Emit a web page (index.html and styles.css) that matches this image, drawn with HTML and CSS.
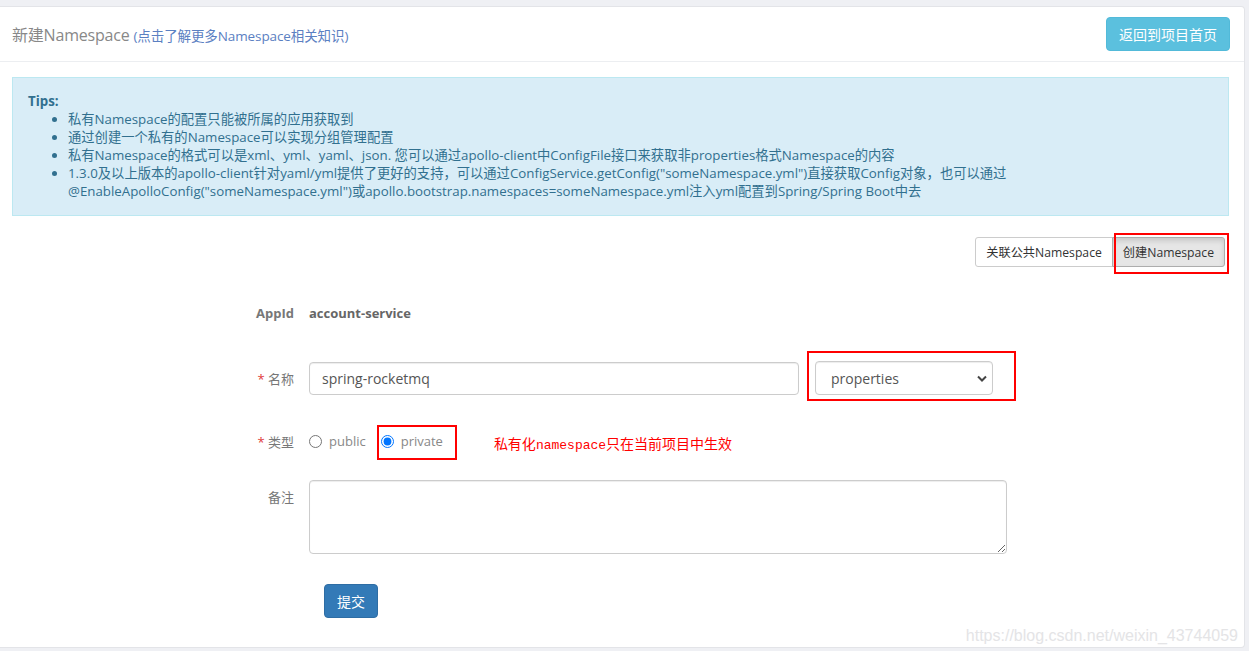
FILE: index.html
```html
<!DOCTYPE html>
<html lang="zh-CN">
<head>
<meta charset="utf-8">
<title>新建Namespace</title>
<link rel="stylesheet" href="styles.css">
</head>
<body>
<div class="panel">
  <div class="panel-header">
    <div class="title">新建Namespace <a class="title-link" href="#">(点击了解更多Namespace相关知识)</a></div>
    <button class="btn btn-info">返回到项目首页</button>
  </div>
  <div class="panel-body">
    <div class="alert">
      <div class="tips-title">Tips:</div>
      <ul class="tips-list">
        <li>私有Namespace的配置只能被所属的应用获取到</li>
        <li>通过创建一个私有的Namespace可以实现分组管理配置</li>
        <li>私有Namespace的格式可以是xml、yml、yaml、json. 您可以通过apollo-client中ConfigFile接口来获取非properties格式Namespace的内容</li>
        <li>1.3.0及以上版本的apollo-client针对yaml/yml提供了更好的支持，可以通过ConfigService.getConfig("someNamespace.yml")直接获取Config对象，也可以通过@EnableApolloConfig("someNamespace.yml")或apollo.bootstrap.namespaces=someNamespace.yml注入yml配置到Spring/Spring Boot中去</li>
      </ul>
    </div>
    <div class="toolbar">
      <div class="btn-group">
        <button class="btn btn-default btn-sm">关联公共Namespace</button>
        <button class="btn btn-default btn-sm active">创建Namespace<span class="mark mark-create"></span></button>
      </div>
    </div>
    <form class="form">
      <div class="row row-appid">
        <label class="label label-bold">AppId</label>
        <div class="field static">account-service</div>
      </div>
      <div class="row row-name">
        <label class="label"><span class="req">*</span> 名称</label>
        <div class="field field-inline">
          <input class="control input-name" type="text" value="spring-rocketmq">
          <div class="select-wrap">
            <select class="control select-format">
              <option>properties</option>
            </select>
            <span class="mark mark-select"></span>
          </div>
        </div>
      </div>
      <div class="row row-type">
        <label class="label"><span class="req">*</span> 类型</label>
        <div class="field field-inline">
          <label class="radio"><input type="radio" name="t"> public</label>
          <label class="radio radio-private"><input type="radio" name="t" checked> private<span class="mark mark-radio"></span></label>
          <span class="note">私有化<span class="note-mono">namespace</span>只在当前项目中生效</span>
        </div>
      </div>
      <div class="row row-comment">
        <label class="label label-top">备注</label>
        <div class="field">
          <textarea class="control textarea"></textarea>
        </div>
      </div>
      <div class="row row-submit">
        <div class="label"></div>
        <div class="field">
          <button type="button" class="btn btn-primary">提交</button>
        </div>
      </div>
    </form>
    <div class="watermark">https://blog.csdn.net/weixin_43744059</div>
  </div>
</div>
</body>
</html>
```

FILE: styles.css
```css
* { box-sizing: border-box; }
html, body { margin: 0; padding: 0; }
body {
  background: #eff0f4;
  padding: 6px 4px 3px 0;
  font-family: "Open Sans", "Noto Sans CJK SC", sans-serif;
  font-size: 13px;
  color: #333;
  height: 651px;
  overflow: hidden;
}
.panel {
  background: #fff;
  border: 1px solid #e3e4e8;
  border-left: none;
  border-radius: 0 4px 4px 0;
  height: 642px;
  position: relative;
}
.panel-header {
  height: 55px;
  border-bottom: 1px solid #eceef1;
  display: flex;
  align-items: center;
  justify-content: space-between;
  padding: 0 14px 0 12px;
}
.title {
  font-size: 16px;
  color: #888;
  letter-spacing: -0.2px;
}
.title-link {
  font-size: 13.5px;
  color: #5b80c2;
  text-decoration: none;
  letter-spacing: -0.1px;
}
.btn {
  font-family: "Open Sans", "Noto Sans CJK SC", sans-serif;
  border: 1px solid transparent;
  border-radius: 4px;
  cursor: pointer;
  position: relative;
}
.btn-info {
  background: #5bc0de;
  border-color: #52bad9;
  color: #fff;
  font-size: 14px;
  height: 34px;
  padding: 0 12px;
}
.panel-body {
  padding: 15px 15px 0 12px;
}
.alert {
  background: #d9edf7;
  border: 1px solid #bce8f1;
  color: #31708f;
  padding: 15px 15px 15px 15px;
  font-size: 13.3px;
  line-height: 18px;
}
.tips-title {
  font-weight: bold;
  line-height: 17px;
}
.tips-list {
  margin: 0;
  padding-left: 40px;
}
.tips-list li { line-height: 18px; }
.toolbar {
  display: flex;
  justify-content: flex-end;
  margin-top: 21px;
  padding-right: 4px;
}
.btn-group { display: flex; }
.btn-default {
  background: #fff;
  border-color: #ccc;
  color: #333;
}
.btn-sm {
  font-size: 12.2px;
  height: 30px;
  padding: 0 10px;
}
.btn-group .btn-sm:first-child { border-radius: 3px 0 0 3px; }
.btn-group .btn-sm:last-child { border-radius: 0 3px 3px 0; margin-left: -1px; }
.btn-default.active {
  background: #e6e6e6;
  border-color: #adadad;
  box-shadow: inset 0 3px 5px rgba(0,0,0,.125);
}
.mark {
  position: absolute;
  border: 2px solid #f00;
  pointer-events: none;
}
.mark-create { left: 1px; top: -5px; right: -5px; bottom: -8px; }
.form { margin-top: 36px; }
.row {
  display: flex;
  align-items: center;
}
.label {
  width: 282px;
  flex: none;
  text-align: right;
  color: #777;
  font-size: 13px;
  margin-right: 15px;
}
.label-bold { font-weight: bold; }
.req { color: #e03a3a; }
.field { flex: none; }
.static {
  font-weight: bold;
  color: #666;
  font-size: 13px;
}
.row-appid { height: 20px; line-height: 20px; }
.row-name { margin-top: 38px; }
.field-inline { display: flex; align-items: center; }
.control {
  font-family: "Open Sans", "Noto Sans CJK SC", sans-serif;
  border: 1px solid #ccc;
  border-radius: 4px;
  box-shadow: inset 0 1px 1px rgba(0,0,0,.075);
  color: #555;
  font-size: 14px;
  background: #fff;
}
.input-name {
  width: 490px;
  height: 33px;
  padding: 0 12px;
}
.select-wrap {
  position: relative;
  margin-left: 16px;
}
.select-format {
  width: 178px;
  height: 34px;
  padding: 0 12px 0 15px;
  appearance: none;
  -webkit-appearance: none;
  background-image: url("data:image/svg+xml;utf8,<svg xmlns='http://www.w3.org/2000/svg' width='10' height='7' viewBox='0 0 10 7'><path d='M1 1.5 L5 5.5 L9 1.5' fill='none' stroke='%23444' stroke-width='2'/></svg>");
  background-repeat: no-repeat;
  background-position: right 5px center;
}
.mark-select { left: -8px; top: -10px; right: -23px; bottom: -6px; }
.row-type { margin-top: 36px; height: 20px; }
.radio {
  display: flex;
  align-items: center;
  color: #888;
  font-size: 13px;
  position: relative;
}
.radio input {
  margin: 0 7px 0 0;
  width: 13px;
  height: 13px;
}
.radio-private { margin-left: 15px; }
.mark-radio { left: -4px; top: -7px; right: -14px; bottom: -10px; }
.note {
  margin-left: 51px;
  color: #f00;
  font-family: "Noto Sans CJK SC", sans-serif;
  font-size: 14px;
  margin-top: 3px;
}
.note-mono {
  font-family: "Liberation Mono", "DejaVu Sans Mono", monospace;
  font-size: 13px;
  letter-spacing: 0;
}
.row-comment { margin-top: 29px; align-items: flex-start; }
.label-top { padding-top: 7px; }
.textarea {
  display: block;
  width: 698px;
  height: 74px;
  resize: vertical;
}
.row-submit { margin-top: 30px; }
.row-submit .field { padding-left: 15px; }
.btn-primary {
  background: #337ab7;
  border-color: #2e6da4;
  color: #fff;
  font-size: 14px;
  height: 34px;
  padding: 0 12px;
}
.watermark {
  position: absolute;
  right: 6px;
  bottom: 2px;
  font-family: "Liberation Sans", sans-serif;
  font-size: 16px;
  color: #e4e4e6;
}
```
